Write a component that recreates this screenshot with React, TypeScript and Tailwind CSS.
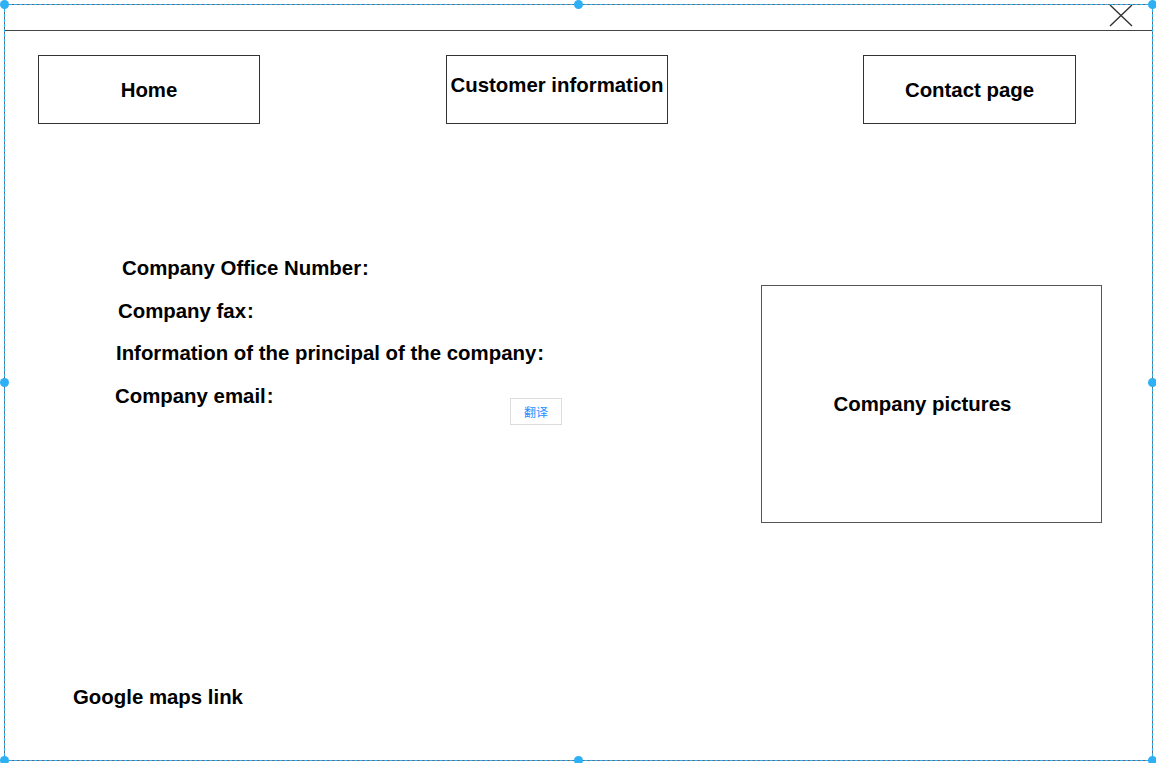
import React from "react";

const Handle = ({ className }: { className: string }) => (
    <div className={`absolute w-[9px] h-[9px] rounded-full bg-[#2eb0f4] ${className}`} />
);

const Colon = () => <span className="ml-[1px]">:</span>;

export default function App() {
    return (
        <div className="relative w-[1156px] h-[763px] bg-white overflow-hidden font-['Liberation_Sans',Arial,sans-serif] font-bold text-[20.4px] leading-[24px] text-black">
            <div className="relative ml-[4px] mt-[4px] w-[1149px] h-[757px] border border-[#666] flex flex-col">
                {/* top bar */}
                <div className="h-[26px] border-b border-[#444] flex justify-end">
                    <svg width="26" height="24" viewBox="0 0 26 24" className="mr-[18px] -mt-[1px]">
                        <path d="M2 1 L24 22 M24 1 L2 22" stroke="#333" strokeWidth="1.4" fill="none" />
                    </svg>
                </div>

                {/* nav */}
                <div className="flex mt-[24px]">
                    <div className="ml-[33px] w-[222px] h-[69px] border border-[#333] flex items-center justify-center">
                        Home
                    </div>
                    <div className="ml-[186px] w-[222px] h-[69px] border border-[#333] flex justify-center pt-[17px]">
                        Customer information
                    </div>
                    <div className="ml-[195px] w-[213px] h-[69px] border border-[#333] flex items-center justify-center">
                        Contact page
                    </div>
                </div>

                {/* body */}
                <div className="flex flex-1 items-start">
                    <div className="flex flex-col pt-[132px] w-[756px]">
                        <div className="ml-[117px]">Company Office Number<Colon /></div>
                        <div className="ml-[113px] mt-[19px]">Company fax<Colon /></div>
                        <div className="ml-[111px] mt-[18px]">Information of the principal of the company<Colon /></div>
                        <div className="ml-[110px] mt-[19px]">Company email<Colon /></div>
                    </div>
                    <div className="mt-[161px] w-[341px] h-[238px] border border-[#555] flex items-center justify-center pr-[18px] pb-[1px]">
                        Company pictures
                    </div>
                </div>

                {/* footer */}
                <div className="ml-[68px] pb-[51px]">Google maps link</div>

                {/* dashed selection outline */}
                <div className="absolute -inset-px border border-dashed border-[#2eb0f4] pointer-events-none" />
            </div>

            {/* translate popup */}
            <div className="absolute left-[510px] top-[398px] w-[52px] h-[27px] border border-[#ddd] bg-white flex items-center justify-center font-normal text-[12px] leading-[16px] text-[#1e8fff] font-['Noto_Sans_CJK_SC',sans-serif]">
                翻译
            </div>

            {/* handles */}
            <Handle className="left-[0px] top-[0px]" />
            <Handle className="left-[574px] top-[0px]" />
            <Handle className="left-[1148px] top-[0px]" />
            <Handle className="left-[0px] top-[378px]" />
            <Handle className="left-[1148px] top-[378px]" />
            <Handle className="left-[0px] top-[756px]" />
            <Handle className="left-[574px] top-[756px]" />
            <Handle className="left-[1148px] top-[756px]" />
        </div>
    );
}
